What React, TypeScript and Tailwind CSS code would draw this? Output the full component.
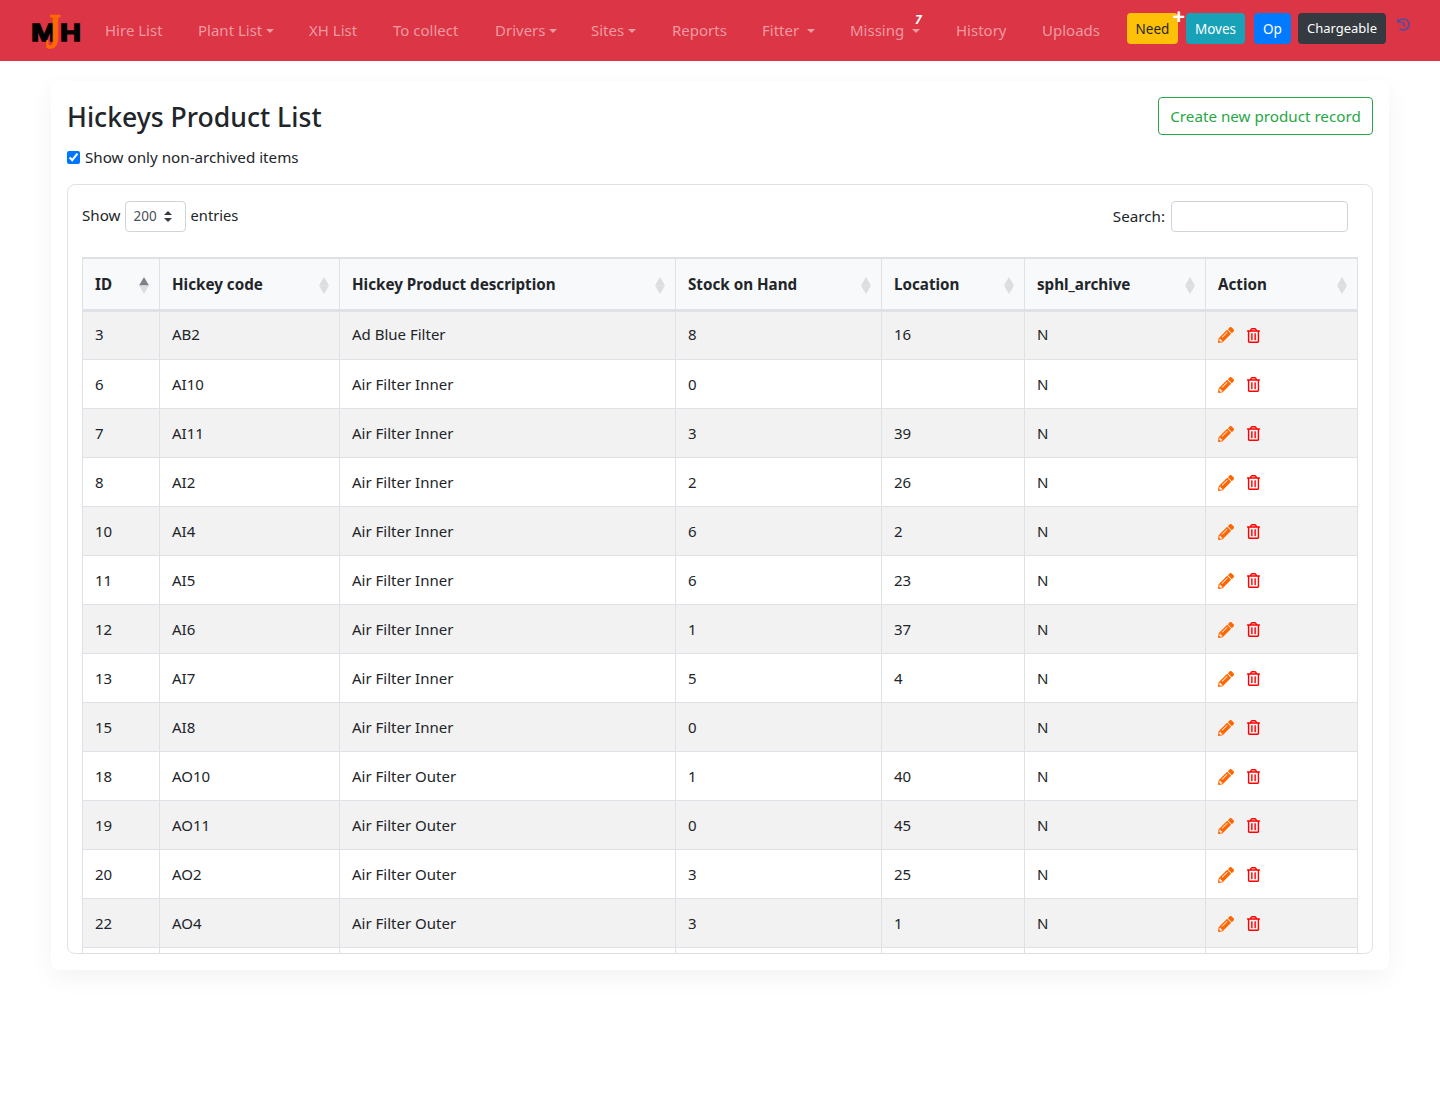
import { FaHistory, FaPencilAlt, FaRegTrashAlt } from "react-icons/fa";

const navItems = [
  { label: "Hire List", w: "w-[57px]" },
  { label: "Plant List", w: "w-[75px]", caret: true },
  { label: "XH List", w: "w-[48px]" },
  { label: "To collect", w: "w-[66px]" },
  { label: "Drivers", w: "w-[60px]", caret: true },
  { label: "Sites", w: "w-[45px]", caret: true },
  { label: "Reports", w: "w-[54px]" },
  { label: "Fitter", w: "w-[52px]", caret: true, wide: true },
  { label: "Missing", w: "w-[70px]", caret: true, wide: true, badge: "7" },
  { label: "History", w: "w-[50px]" },
  { label: "Uploads", w: "w-[58px]" },
];

const rows = [
  ["3", "AB2", "Ad Blue Filter", "8", "16"],
  ["6", "AI10", "Air Filter Inner", "0", ""],
  ["7", "AI11", "Air Filter Inner", "3", "39"],
  ["8", "AI2", "Air Filter Inner", "2", "26"],
  ["10", "AI4", "Air Filter Inner", "6", "2"],
  ["11", "AI5", "Air Filter Inner", "6", "23"],
  ["12", "AI6", "Air Filter Inner", "1", "37"],
  ["13", "AI7", "Air Filter Inner", "5", "4"],
  ["15", "AI8", "Air Filter Inner", "0", ""],
  ["18", "AO10", "Air Filter Outer", "1", "40"],
  ["19", "AO11", "Air Filter Outer", "0", "45"],
  ["20", "AO2", "Air Filter Outer", "3", "25"],
  ["22", "AO4", "Air Filter Outer", "3", "1"],
];

const columns = ["ID", "Hickey code", "Hickey Product description", "Stock on Hand", "Location", "sphl_archive", "Action"];

function SortIcon({ active }: { active?: boolean }) {
  return (
    <svg width="10" height="17" viewBox="0 0 10 17" className="absolute right-[10px] top-[18px]">
      <path d="M5 0 L10 8.5 H0 Z" fill={active ? "#7f8389" : "#dcdde0"} />
      <path d="M5 17 L10 8.5 H0 Z" fill="#dcdde0" />
    </svg>
  );
}

function Caret() {
  return <span className="ml-[4px] inline-block align-[3px] border-x-[4px] border-t-[4px] border-x-transparent border-t-current" />;
}

function Logo() {
  return (
    <svg width="54" height="36" viewBox="0 0 54 36" className="shrink-0 overflow-visible">
      <text x="1" y="27" fontFamily="Liberation Sans" fontWeight="700" fontSize="24" fill="#000" stroke="#000" strokeWidth="1.4" textLength="26" lengthAdjust="spacingAndGlyphs">M</text>
      <text x="30" y="27" fontFamily="Liberation Sans" fontWeight="700" fontSize="24" fill="#000" stroke="#000" strokeWidth="1.4" textLength="21" lengthAdjust="spacingAndGlyphs">H</text>
      <text x="15" y="34" fontFamily="Liberation Serif" fontWeight="700" fontSize="50" fill="#ff6a00" stroke="#ff6a00" strokeWidth="0.6" textLength="16" lengthAdjust="spacingAndGlyphs">J</text>
    </svg>
  );
}

export default function App() {
  return (
    <div className="min-h-[1100px] bg-white font-['Noto_Sans',sans-serif] text-[15.2px] text-[#212529]">
      <nav className="flex h-[61px] items-start bg-[#dc3545] pl-[30px]">
        <div className="mt-[14px]">
          <Logo />
        </div>
        <ul className="ml-[21px] mt-[19px] flex gap-[36px] text-[15px] text-[#ee9aa2]">
          {navItems.map((item) => (
            <li key={item.label} className={`relative whitespace-nowrap ${item.w}`}>
              {item.label}
              {item.caret && (item.wide ? <span className="ml-[4px]"><Caret /></span> : <Caret />)}
              {item.badge && (
                <span className="absolute left-[65px] top-[-8px] text-[12px] font-bold italic text-white">{item.badge}</span>
              )}
            </li>
          ))}
        </ul>
        <div className="ml-[27px] mt-[13px] flex items-start text-[13.5px]">
          <span className="relative flex h-[31px] w-[51px] items-center justify-center rounded bg-[#ffc107] pt-[1px] text-[#212529]">
            Need
            <span className="absolute right-[-7px] top-[-10px] text-[22px] leading-[24px] font-bold text-white">+</span>
          </span>
          <span className="ml-[8px] flex h-[31px] w-[59px] items-center justify-center rounded bg-[#17a2b8] pt-[1px] text-white">Moves</span>
          <span className="ml-[9px] flex h-[31px] w-[37px] items-center justify-center rounded bg-[#007bff] pt-[1px] text-white">Op</span>
          <span className="ml-[7px] flex h-[31px] w-[88px] items-center justify-center rounded bg-[#343a40] pt-[1px] text-[13px] text-white">Chargeable</span>
          <FaHistory className="ml-[11px] mt-[5px] text-[13px] text-[#4b4f9e]" />
        </div>
      </nav>

      <main className="px-[51px] pt-[20px]">
        <div className="h-[889px] rounded-lg bg-white px-[16px] pt-[16px] shadow-[0_8px_24px_rgba(0,0,0,0.05)]">
          <div className="flex items-start justify-between">
            <div>
              <h1 className="text-[26.6px] leading-[40px] font-medium">Hickeys Product List</h1>
              <label className="mt-[8px] flex h-[24px] items-center">
                <input type="checkbox" defaultChecked className="h-[13px] w-[13px] accent-[#0075ff]" />
                <span className="ml-[5px]">Show only non-archived items</span>
              </label>
            </div>
            <button className="h-[38px] w-[215px] rounded border border-[#28a745] text-[#28a745]">Create new product record</button>
          </div>

          <div className="mt-[15px] h-[770px] overflow-hidden rounded-lg border border-[#dfe1e5] px-[14px]">
            <div className="flex h-[72px] items-start justify-between pr-[10px] pt-[16px]">
              <div className="flex items-center">
                <span className="pb-[2px]">Show</span>
                <span className="ml-[4px] flex h-[31px] w-[61px] items-center gap-[7px] rounded border border-[#ced4da] pl-[8px] text-[13.5px] text-[#495057]">
                  200
                  <svg width="8" height="11" viewBox="0 0 8 11">
                    <path d="M4 0 L8 4 H0 Z M4 11 L0 7 H8 Z" fill="#343a40" />
                  </svg>
                </span>
                <span className="ml-[5px] pb-[2px] text-[14.7px]">entries</span>
              </div>
              <div className="flex items-center">
                <span>Search:</span>
                <span className="ml-[6px] h-[31px] w-[177px] rounded border border-[#ced4da]" />
              </div>
            </div>

            <table className="w-[1275px] table-fixed border-collapse text-[15px]">
              <colgroup>
                <col className="w-[77px]" />
                <col className="w-[180px]" />
                <col className="w-[336px]" />
                <col className="w-[206px]" />
                <col className="w-[143px]" />
                <col className="w-[181px]" />
                <col className="w-[152px]" />
              </colgroup>
              <thead>
                <tr className="h-[52px] bg-[#f8f9fa] text-[15.2px]">
                  {columns.map((col, i) => (
                    <th key={col} className="relative border border-b-[3px] border-t-[2px] border-[#dee2e6] pl-[12px] pt-[2px] text-left font-bold">
                      {col}
                      <SortIcon active={i === 0} />
                    </th>
                  ))}
                </tr>
              </thead>
              <tbody>
                {rows.map((row, i) => (
                  <tr key={row[0]} className={`h-[49px] ${i % 2 === 0 ? "bg-[#f2f2f2]" : "bg-white"}`}>
                    {row.map((cell, j) => (
                      <td key={j} className={`border border-[#dee2e6] pl-[12px] ${i === 0 ? "pb-[2px]" : "pt-[2px]"}`}>{cell}</td>
                    ))}
                    <td className={`border border-[#dee2e6] pl-[12px] ${i === 0 ? "pb-[2px]" : "pt-[2px]"}`}>N</td>
                    <td className={`border border-[#dee2e6] pl-[12px] ${i === 0 ? "" : "pt-[2px]"}`}>
                      <div className="flex items-center gap-[12px]">
                        <FaPencilAlt className="text-[16px] text-[#ff6600]" />
                        <FaRegTrashAlt className="text-[15px] text-[#ff0000]" />
                      </div>
                    </td>
                  </tr>
                ))}
                <tr className="h-[49px]">
                  {columns.map((col) => (
                    <td key={col} className="border border-[#dee2e6]" />
                  ))}
                </tr>
              </tbody>
            </table>
          </div>
        </div>
      </main>
    </div>
  );
}
